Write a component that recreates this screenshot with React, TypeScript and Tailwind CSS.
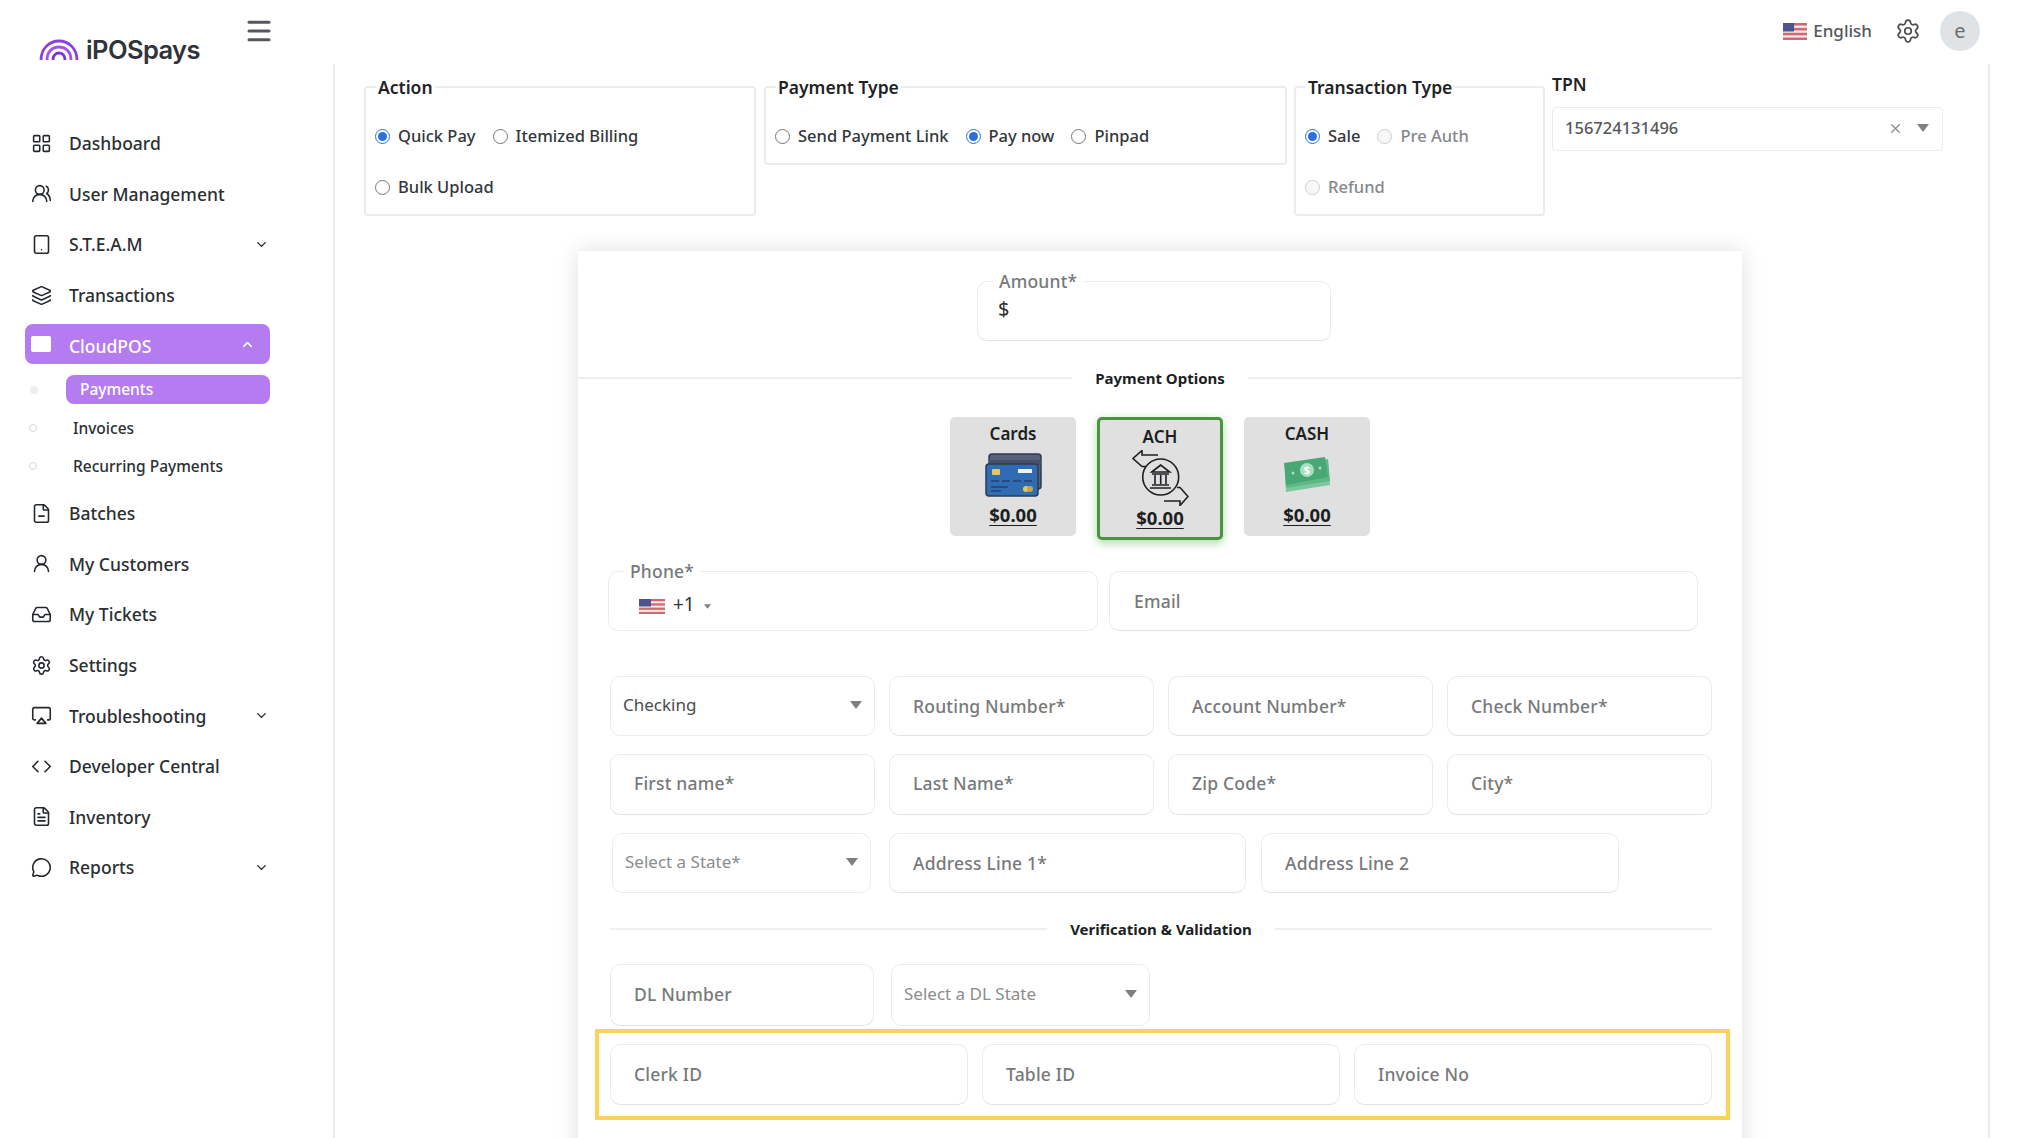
import React from 'react';
import {
  Airplay,
  ChevronDown,
  ChevronUp,
  Code,
  FileMinus,
  FileText,
  Inbox,
  Layers,
  LayoutGrid,
  Menu,
  MessageCircle,
  Settings,
  Tablet,
  UserRound,
  UsersRound,
  X,
} from 'lucide-react';

const topNav = [
  { label: 'Dashboard', icon: LayoutGrid },
  { label: 'User Management', icon: UsersRound },
  { label: 'S.T.E.A.M', icon: Tablet, more: true },
  { label: 'Transactions', icon: Layers },
];

const bottomNav = [
  { label: 'Batches', icon: FileMinus },
  { label: 'My Customers', icon: UserRound },
  { label: 'My Tickets', icon: Inbox },
  { label: 'Settings', icon: Settings },
  { label: 'Troubleshooting', icon: Airplay, more: true },
  { label: 'Developer Central', icon: Code },
  { label: 'Inventory', icon: FileText },
  { label: 'Reports', icon: MessageCircle, more: true },
];

function NavItem({ label, icon: Icon, more }: { label: string; icon: React.ElementType; more?: boolean }) {
  return (
    <div className="flex h-[50.6px] items-center pl-[6px] pr-[1px]">
      <Icon className="h-[21px] w-[21px] text-[#24282c]" strokeWidth={1.8} />
      <span className="ml-[17px] flex-1 text-[17.5px] font-medium text-[#2b2f33]">{label}</span>
      {more && <ChevronDown className="h-[15px] w-[15px] text-[#24282c]" strokeWidth={2.2} />}
    </div>
  );
}

function Flag({ className }: { className: string }) {
  return (
    <svg viewBox="0 0 26 16" className={className} preserveAspectRatio="none">
      <rect width="26" height="16" fill="#f3eaea" />
      <rect y="0" width="26" height="2.4" fill="#cf6a73" />
      <rect y="4.6" width="26" height="2.4" fill="#cf6a73" />
      <rect y="9.2" width="26" height="2.4" fill="#cf6a73" />
      <rect y="13.7" width="26" height="2.3" fill="#cf6a73" />
      <rect width="12" height="8" fill="#4a5590" />
    </svg>
  );
}

function Caret({ className }: { className: string }) {
  return (
    <svg viewBox="0 0 12 8" className={className}>
      <polygon points="0,0 12,0 6,8" fill="#7d7f82" />
    </svg>
  );
}

function Radio({ label, checked, disabled }: { label: string; checked?: boolean; disabled?: boolean }) {
  return (
    <label className="flex items-center">
      <input
        type="radio"
        readOnly
        checked={!!checked}
        disabled={disabled}
        className="m-0 h-[15px] w-[15px] accent-[#2b6fe6]"
      />
      <span className={`ml-[8px] text-[16.5px] font-medium ${disabled ? 'text-[#85888b]' : 'text-[#33373b]'}`}>{label}</span>
    </label>
  );
}

function Group({ title, className, children }: { title: string; className: string; children: React.ReactNode }) {
  return (
    <fieldset className={`rounded-[4px] border-2 border-[#ececec] ${className}`}>
      <legend className="ml-[1px] px-[2px] text-[17.5px] leading-[24px] font-semibold text-[#1f2326]">{title}</legend>
      {children}
    </fieldset>
  );
}

function Field({ label, className = '' }: { label: string; className?: string }) {
  return (
    <div className={`flex items-center rounded-[10px] border border-[#ececec] border-b-[#e2e2e2] pl-[23px] text-[17.5px] font-medium tracking-[0.2px] text-[#77797b] ${className}`}>
      {label}
    </div>
  );
}

function SelectField({ label, dark, className = '' }: { label: string; dark?: boolean; className?: string }) {
  return (
    <div className={`flex items-center justify-between rounded-[10px] border border-[#ececec] pb-[2px] pl-[12px] pr-[12px] text-[17px] ${dark ? 'text-[#4a4d50]' : 'text-[#8a8c8e]'} ${className}`}>
      {label}
      <Caret className="h-[8px] w-[12px]" />
    </div>
  );
}

function Divider({ label, className }: { label: string; className: string }) {
  return (
    <div className={`flex items-center ${className}`}>
      <div className="h-[2px] flex-1 bg-[#efefef]" />
      <span className="px-[23px] text-[15px] font-bold text-[#1c1f22]">{label}</span>
      <div className="h-[2px] flex-1 bg-[#efefef]" />
    </div>
  );
}

function Tile({ title, active, children }: { title: string; active?: boolean; children: React.ReactNode }) {
  return (
    <div
      className={`flex w-[126px] flex-col items-center rounded-[5px] bg-[#e0e0e0] ${
        active
          ? 'h-[123px] border-[3px] border-[#4a9440] pt-[5px] shadow-[0_3px_10px_rgba(70,170,60,0.45)]'
          : 'h-[119px] pt-[5px]'
      }`}
    >
      <span className="text-[17px] leading-[24px] font-semibold text-[#1c1f22]">{title}</span>
      <div className="flex h-[58px] items-center">{children}</div>
      <span className="text-[18.5px] leading-[22px] font-bold text-[#1c1f22] underline underline-offset-[3px]">$0.00</span>
    </div>
  );
}

function CardsIcon() {
  return (
    <svg viewBox="0 0 57 44" className="h-[44px] w-[57px]">
      <rect x="4" y="1" width="52" height="35" rx="3" fill="#56617a" stroke="#2c3a57" strokeWidth="1.5" />
      <rect x="4" y="7" width="52" height="5" fill="#465069" />
      <rect x="1" y="11" width="52" height="32" rx="3" fill="#2f6cb3" stroke="#2c3a57" strokeWidth="1.5" />
      <rect x="7" y="16" width="8" height="6" rx="1" fill="#e8c65a" />
      <rect x="33" y="16" width="14" height="4" fill="#eef2f6" />
      <path d="M6 28h8M17 28h8M28 28h8M39 28h8" stroke="#24406b" strokeWidth="1.6" />
      <path d="M6 34h17M6 38h10" stroke="#24406b" strokeWidth="1.6" />
      <circle cx="41" cy="36" r="3" fill="#e8c65a" />
      <circle cx="45" cy="36" r="3" fill="#c7a74a" />
    </svg>
  );
}

function BankIcon() {
  return (
    <svg viewBox="0 0 57 56" className="h-[56px] w-[57px]" fill="none" stroke="#1d1f22" strokeWidth="1.6">
      <path d="M26 5H10V0.5L1 8.5l9 8 4 0" />
      <path d="M32 51h16v4.5l8-9-8-9-3 0" />
      <circle cx="28.7" cy="27" r="18" />
      <path d="M28.7 15l-9 7h18zM20 24h17M20 35h17M18 38h21M23 25v9M28.7 25v9M34 25v9" />
    </svg>
  );
}

function CashIcon() {
  return (
    <svg viewBox="0 0 47 36" className="h-[36px] w-[47px]">
      <path d="M1 14l43-8 2 22-44 7z" fill="#7cc79b" />
      <path d="M1 10l43-8 2 22-44 7z" fill="#5fb885" />
      <path d="M0 6l41-6 3 20L2 28z" fill="#47a873" />
      <circle cx="23" cy="13" r="7" fill="#a8dfc0" />
      <text x="23" y="17" textAnchor="middle" fontSize="11" fontWeight="700" fill="#fff">$</text>
      <circle cx="9" cy="16" r="1.5" fill="#a8dfc0" />
      <circle cx="36" cy="11" r="1.5" fill="#a8dfc0" />
    </svg>
  );
}

export default function App() {
  return (
    <div className="flex h-[1138px] w-full overflow-hidden bg-white font-['Noto_Sans',sans-serif]">
      {/* Sidebar */}
      <aside className="w-[333px] shrink-0">
        <div className="relative h-[118px]">
          <div className="flex items-center pl-[39px] pt-[35px]">
            <svg viewBox="0 0 40 22" className="h-[22px] w-[40px]" fill="none">
              <path d="M2 21C2 10 10 2 20 2s18 8 18 19" stroke="#8b3fe0" strokeWidth="2.8" />
              <path d="M8 21C8 13 13 8 20 8s12 5 12 13" stroke="#a155e8" strokeWidth="2.8" />
              <path d="M14 21c0-4 2-7 6-7s6 3 6 7" stroke="#7a34d4" strokeWidth="2.8" />
            </svg>
            <span className="ml-[7px] font-['Inter',sans-serif] text-[25.5px] leading-[30px] font-semibold tracking-[-0.6px] text-[#30343a]">iPOSpays</span>
          </div>
          <Menu className="absolute top-[16px] left-[244px] h-[30px] w-[30px] text-[#55585c]" strokeWidth={2.4} />
        </div>
        <nav className="ml-[25px] w-[245px]">
          {topNav.map((item) => (
            <NavItem key={item.label} {...item} />
          ))}
          <div className="mt-[4px] flex h-[40px] items-center rounded-[8px] bg-[#b57cf2] pl-[6px] pr-[15px]">
            <div className="h-[16px] w-[20px] rounded-[2px] bg-white" />
            <span className="ml-[18px] flex-1 pt-[4px] text-[17.5px] font-medium text-white">CloudPOS</span>
            <ChevronUp className="h-[15px] w-[15px] text-white" strokeWidth={2.4} />
          </div>
          <div className="mt-[11px] flex items-center">
            <div className="ml-[5px] h-[8px] w-[8px] rounded-full bg-[#eeeeee]" />
            <div className="ml-[28px] flex h-[29px] flex-1 items-center rounded-[8px] bg-[#b57cf2] pl-[14px] text-[15.5px] font-medium text-white">
              Payments
            </div>
          </div>
          <div className="mt-[5px] flex h-[38px] items-center">
            <div className="ml-[4px] h-[8px] w-[8px] rounded-full border border-[#d8d8d8]" />
            <span className="ml-[36px] text-[15.5px] font-medium text-[#2b2f33]">Invoices</span>
          </div>
          <div className="flex h-[38px] items-center">
            <div className="ml-[4px] h-[8px] w-[8px] rounded-full border border-[#d8d8d8]" />
            <span className="ml-[36px] text-[15.5px] font-medium text-[#2b2f33]">Recurring Payments</span>
          </div>
          <div className="mt-[2.6px]">
            {bottomNav.map((item) => (
              <NavItem key={item.label} {...item} />
            ))}
          </div>
        </nav>
      </aside>

      <div className="flex min-w-0 flex-1 flex-col">
        {/* Header */}
        <header className="flex h-[64px] shrink-0 items-start justify-end pr-[37px] pt-[11px]">
          <div className="flex h-[40px] items-center">
            <Flag className="h-[17px] w-[24px]" />
            <span className="ml-[6px] text-[17px] font-medium text-[#55585b]">English</span>
            <Settings className="ml-[23px] h-[26px] w-[26px] text-[#4a4d50]" strokeWidth={1.6} />
            <div className="ml-[19px] flex h-[40px] w-[40px] items-center justify-center rounded-full bg-[#e0e3e6] text-[20px] text-[#6b6e71]">
              e
            </div>
          </div>
        </header>

        {/* Main */}
        <main className="mr-[27px] flex-1 border-x-2 border-[#ececec]">
          <div className="ml-[29px] flex h-[187px] items-start pt-[11px]">
            <Group title="Action" className="h-[141px] w-[392px] pl-[9px]">
              <div className="flex gap-x-[17px] pt-[25px]">
                <Radio label="Quick Pay" checked />
                <Radio label="Itemized Billing" />
              </div>
              <div className="flex pt-[26px]">
                <Radio label="Bulk Upload" />
              </div>
            </Group>
            <Group title="Payment Type" className="ml-[8px] h-[90px] w-[523px] pl-[9px]">
              <div className="flex gap-x-[17px] pt-[25px]">
                <Radio label="Send Payment Link" />
                <Radio label="Pay now" checked />
                <Radio label="Pinpad" />
              </div>
            </Group>
            <Group title="Transaction Type" className="ml-[7px] h-[141px] w-[251px] pl-[9px]">
              <div className="flex gap-x-[17px] pt-[25px]">
                <Radio label="Sale" checked />
                <Radio label="Pre Auth" disabled />
              </div>
              <div className="flex pt-[26px]">
                <Radio label="Refund" disabled />
              </div>
            </Group>
            <div className="ml-[7px] -mt-[4px] w-[391px]">
              <div className="text-[17.5px] leading-[26px] font-semibold text-[#1f2326]">TPN</div>
              <div className="mt-[10px] flex h-[44px] items-center rounded-[4px] border border-[#ececec] pb-[2px] pl-[12px] pr-[13px] text-[16.5px] font-medium text-[#55585b]">
                <span className="flex-1">156724131496</span>
                <X className="h-[15px] w-[15px] text-[#8a8c8e]" strokeWidth={2} />
                <Caret className="ml-[14px] h-[8px] w-[12px]" />
              </div>
            </div>
          </div>

          {/* Payment card */}
          <section className="ml-[243px] h-[1000px] w-[1164px] rounded-t-[2px] pt-[30px] shadow-[0_0_22px_rgba(0,0,0,0.13)]">
            <div className="relative ml-[399px] flex h-[60px] w-[354px] items-center rounded-[10px] border border-[#ececec] border-b-[#e2e2e2] pb-[4px] pl-[20px] text-[20px] text-[#2b2f33]">
              <span className="absolute top-[-12px] left-[15px] bg-white px-[6px] text-[17.5px] leading-[22px] font-medium tracking-[0.2px] text-[#77797b]">Amount*</span>
              $
            </div>
            <Divider label="Payment Options" className="mt-[27px] h-[20px]" />
            <div className="mt-[29px] flex items-start justify-center gap-x-[21px]">
              <Tile title="Cards">
                <CardsIcon />
              </Tile>
              <Tile title="ACH" active>
                <BankIcon />
              </Tile>
              <Tile title="CASH">
                <CashIcon />
              </Tile>
            </div>

            <div className="pl-[32px] pr-[30px]">
              <div className="mt-[31px] -ml-[2px] flex gap-x-[11px]">
                <div className="relative flex h-[60px] w-[490px] items-center rounded-[10px] border border-[#ececec] pl-[30px] pt-[10px] text-[19px] text-[#33373b]">
                  <span className="absolute top-[-12px] left-[15px] bg-white px-[6px] text-[17.5px] leading-[22px] font-medium tracking-[0.2px] text-[#77797b]">Phone*</span>
                  <Flag className="h-[15px] w-[26px]" />
                  <span className="ml-[8px] -mt-[3px]">+1</span>
                  <Caret className="ml-[9px] h-[5px] w-[7px]" />
                </div>
                <Field label="Email" className="h-[60px] w-[589px] pl-[24px]" />
              </div>

              <div className="mt-[45px] grid grid-cols-4 gap-x-[14px] gap-y-[18px]">
                <SelectField label="Checking" dark className="h-[60px]" />
                <Field label="Routing Number*" className="h-[60px]" />
                <Field label="Account Number*" className="h-[60px]" />
                <Field label="Check Number*" className="h-[60px]" />
                <Field label="First name*" className="h-[61px] pb-[3px]" />
                <Field label="Last Name*" className="h-[61px] pb-[3px]" />
                <Field label="Zip Code*" className="h-[61px] pb-[3px]" />
                <Field label="City*" className="h-[61px] pb-[3px]" />
              </div>

              <div className="mt-[18px] flex">
                <SelectField label="Select a State*" className="ml-[2px] h-[60px] w-[259px]" />
                <Field label="Address Line 1*" className="ml-[18px] h-[60px] w-[357px]" />
                <Field label="Address Line 2" className="ml-[15px] h-[60px] w-[358px]" />
              </div>

              <Divider label="Verification & Validation" className="mt-[26px] h-[20px]" />

              <div className="mt-[25px] flex">
                <Field label="DL Number" className="h-[62px] w-[264px] pb-[2px]" />
                <SelectField label="Select a DL State" className="ml-[17px] h-[62px] w-[259px]" />
              </div>

              <div className="mt-[3px] -ml-[15px] -mr-[18px] grid grid-cols-3 gap-x-[14px] border-[4px] border-[#fbd25c] pt-[11px] pr-[14px] pb-[11px] pl-[11px]">
                <Field label="Clerk ID" className="h-[61px]" />
                <Field label="Table ID" className="h-[61px]" />
                <Field label="Invoice No" className="h-[61px]" />
              </div>
            </div>
          </section>
        </main>
      </div>
    </div>
  );
}
